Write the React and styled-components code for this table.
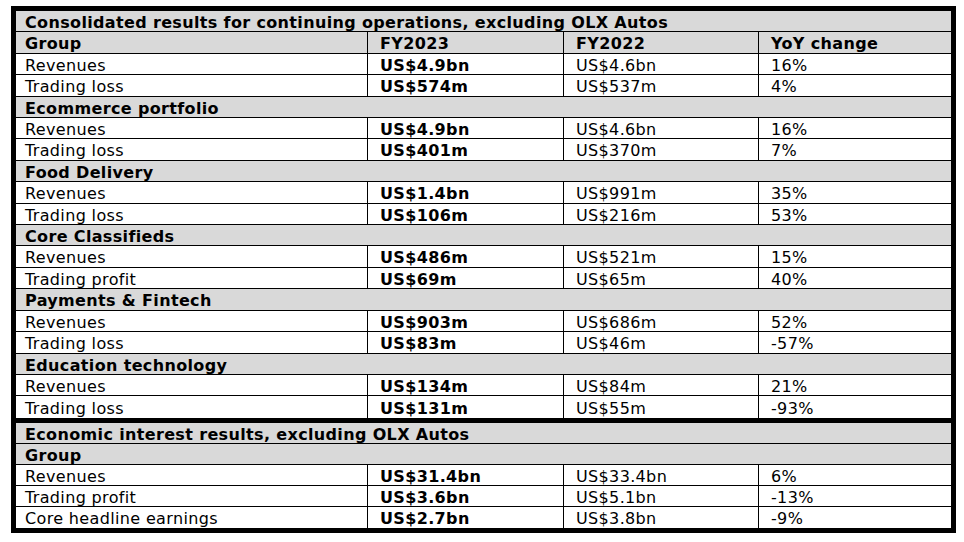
import React from "react";
import styled, { createGlobalStyle } from "styled-components";

const consolidated = [
  {
    name: "Group",
    columns: true,
    rows: [
      ["Revenues", "US$4.9bn", "US$4.6bn", "16%"],
      ["Trading loss", "US$574m", "US$537m", "4%"],
    ],
  },
  {
    name: "Ecommerce portfolio",
    rows: [
      ["Revenues", "US$4.9bn", "US$4.6bn", "16%"],
      ["Trading loss", "US$401m", "US$370m", "7%"],
    ],
  },
  {
    name: "Food Delivery",
    rows: [
      ["Revenues", "US$1.4bn", "US$991m", "35%"],
      ["Trading loss", "US$106m", "US$216m", "53%"],
    ],
  },
  {
    name: "Core Classifieds",
    rows: [
      ["Revenues", "US$486m", "US$521m", "15%"],
      ["Trading profit", "US$69m", "US$65m", "40%"],
    ],
  },
  {
    name: "Payments & Fintech",
    rows: [
      ["Revenues", "US$903m", "US$686m", "52%"],
      ["Trading loss", "US$83m", "US$46m", "-57%"],
    ],
  },
  {
    name: "Education technology",
    rows: [
      ["Revenues", "US$134m", "US$84m", "21%"],
      ["Trading loss", "US$131m", "US$55m", "-93%"],
    ],
  },
];

const economic = [
  {
    name: "Group",
    rows: [
      ["Revenues", "US$31.4bn", "US$33.4bn", "6%"],
      ["Trading profit", "US$3.6bn", "US$5.1bn", "-13%"],
      ["Core headline earnings", "US$2.7bn", "US$3.8bn", "-9%"],
    ],
  },
];

const GlobalStyle = createGlobalStyle`
  html, body {
    margin: 0;
    background: #ffffff;
  }
  body {
    font-family: "DejaVu Sans", Verdana, sans-serif;
    color: #000000;
  }
`;

const Page = styled.div`
  padding: 6px 0 0 11px;
`;

const Frame = styled.div`
  width: 945px;
  box-sizing: border-box;
  border: 5px solid #000;
`;

const Section = styled.div`
  & + & {
    border-top: 5px solid #000;
  }
`;

const Row = styled.div`
  display: grid;
  grid-template-columns: 351px 196px 195px 1fr;
  height: ${(p) => p.$h}px;
  box-sizing: border-box;
  background: ${(p) => (p.$shaded ? "#d9d9d9" : "#ffffff")};
  border-bottom: 1px solid #000;
  &:last-child {
    border-bottom: none;
  }
`;

const Cell = styled.div`
  display: flex;
  align-items: center;
  padding-left: ${(p) => (p.$first ? 9 : 12)}px;
  padding-top: 2px;
  font-size: 16px;
  letter-spacing: 0.35px;
  font-weight: ${(p) => (p.$bold ? 700 : 400)};
  white-space: nowrap;
  border-left: ${(p) => (p.$first ? "none" : "1px solid #000")};
`;

const Title = styled.div`
  grid-column: 1 / -1;
  display: flex;
  align-items: center;
  padding-left: 9px;
  padding-top: 2px;
  font-size: 16px;
  letter-spacing: 0.35px;
  font-weight: 700;
  white-space: nowrap;
`;

const ResultsSection = ({ title, groups, h }) => (
  <Section>
    <Row $shaded $h={h}>
      <Title>{title}</Title>
    </Row>
    {groups.map((g) => (
      <React.Fragment key={g.name}>
        {g.columns ? (
          <Row $shaded $h={h}>
            <Cell $first $bold>{g.name}</Cell>
            <Cell $bold>FY2023</Cell>
            <Cell $bold>FY2022</Cell>
            <Cell $bold>YoY change</Cell>
          </Row>
        ) : (
          <Row $shaded $h={h}>
            <Title>{g.name}</Title>
          </Row>
        )}
        {g.rows.map((r) => (
          <Row key={r[0]} $h={h}>
            <Cell $first>{r[0]}</Cell>
            <Cell $bold>{r[1]}</Cell>
            <Cell>{r[2]}</Cell>
            <Cell>{r[3]}</Cell>
          </Row>
        ))}
      </React.Fragment>
    ))}
  </Section>
);

export default function App() {
  return (
    <Page>
      <GlobalStyle />
      <Frame>
        <ResultsSection
          title="Consolidated results for continuing operations, excluding OLX Autos"
          groups={consolidated}
          h={21.42}
        />
        <ResultsSection
          title="Economic interest results, excluding OLX Autos"
          groups={economic}
          h={21}
        />
      </Frame>
    </Page>
  );
}
